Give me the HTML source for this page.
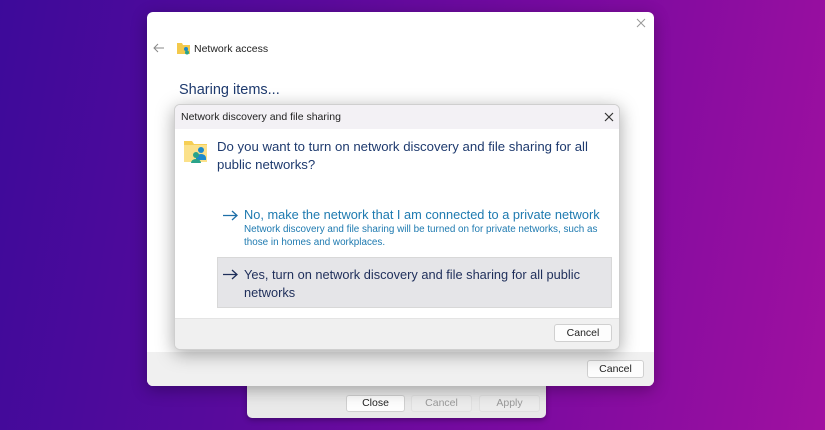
<!DOCTYPE html>
<html><head><meta charset="utf-8"><style>
*{margin:0;padding:0;box-sizing:border-box}
body{width:825px;height:430px;overflow:hidden;position:relative;font-family:"Liberation Sans",sans-serif;
background:linear-gradient(100deg,#3d0a9a 0%,#5a0a9c 35%,#7a0aa0 65%,#a010a0 100%);}
.abs{position:absolute}
.btn{position:absolute;background:#fdfdfd;border:1px solid #d0d0d0;border-radius:3px;font-size:10.5px;color:#222;text-align:center}
</style></head><body>
<div class="abs" style="left:247px;top:380px;width:299px;height:38px;background:#e9e9e9;border-radius:0 0 5px 5px;box-shadow:0 2px 6px rgba(0,0,0,.3)">
 <div class="btn" style="left:99px;top:15px;width:59px;height:17px;line-height:15px">Close</div>
 <div class="btn" style="left:164px;top:15px;width:61px;height:17px;line-height:15px;color:#999;background:#ececec;border-color:#e0e0e0">Cancel</div>
 <div class="btn" style="left:232px;top:15px;width:61px;height:17px;line-height:15px;color:#999;background:#ececec;border-color:#e0e0e0">Apply</div>
</div>
<div class="abs" style="left:147px;top:12px;width:507px;height:374px;background:#fff;border-radius:6px;overflow:hidden;box-shadow:0 4px 16px rgba(0,0,0,.3)">
 <svg class="abs" style="left:489px;top:6px" width="10" height="10" viewBox="0 0 10 10"><path d="M1 1L9 9M9 1L1 9" stroke="#999" stroke-width="1"/></svg>
 <svg class="abs" style="left:6px;top:31px" width="12" height="10" viewBox="0 0 12 10"><path d="M11 5H1M5 1L1 5l4 4" stroke="#888" stroke-width="1" fill="none"/></svg>
 <svg class="abs" style="left:30px;top:30px" width="14" height="13" viewBox="0 0 14 13"><path d="M0 1h5l1 2h7v9H0z" fill="#f3c94c"/><circle cx="9" cy="7" r="2" fill="#1d8acb"/><circle cx="10" cy="10.5" r="2" fill="#2aa38a"/></svg>
 <div class="abs" style="left:47px;top:31px;font-size:10.5px;color:#222">Network access</div>
 <div class="abs" style="left:32px;top:70px;font-size:14.5px;color:#1e3a6e">Sharing items...</div>
 <div class="abs" style="left:0;top:340px;width:507px;height:34px;background:#f0f0f0"></div>
 <div class="btn" style="left:440px;top:348px;width:57px;height:18px;line-height:16px">Cancel</div>
</div>
<div class="abs" style="left:174px;top:104px;width:446px;height:246px;background:#fff;border:1px solid #cfcfcf;border-radius:6px;overflow:hidden;box-shadow:0 4px 18px rgba(0,0,0,.35)">
 <div class="abs" style="left:0;top:0;width:446px;height:24px;background:#f3f1f5"></div>
 <div class="abs" style="left:6px;top:6px;font-size:10.5px;color:#222">Network discovery and file sharing</div>
 <svg class="abs" style="left:429px;top:7px" width="10" height="10" viewBox="0 0 10 10"><path d="M1 1L9 9M9 1L1 9" stroke="#333" stroke-width="1.2"/></svg>
 <svg class="abs" style="left:9px;top:35px" width="25" height="24" viewBox="0 0 25 24"><path d="M0 1h8l2 3h13v18H0z" fill="#f6cf55"/><path d="M0 5h23v17H0z" fill="#fbe18a"/><circle cx="17" cy="10" r="3" fill="#1d8acb"/><path d="M12 18a5 4 0 0 1 10 0v2H12z" fill="#1d8acb"/><circle cx="12" cy="15" r="3" fill="#2aa38a"/><path d="M7 23a5 4 0 0 1 10 0z" fill="#2aa38a"/></svg>
 <div class="abs" style="left:42px;top:33px;width:380px;font-size:13.2px;line-height:18px;color:#1e3a6e">Do you want to turn on network discovery and file sharing for all public networks?</div>
 <svg class="abs" style="left:47px;top:105px" width="16" height="11" viewBox="0 0 16 11"><path d="M1 5.5H15M10 1l5 4.5-5 4.5" stroke="#1e6fa8" stroke-width="1.3" fill="none"/></svg>
 <div class="abs" style="left:69px;top:102px;font-size:12.8px;color:#1e7ab0;white-space:nowrap">No, make the network that I am connected to a private network</div>
 <div class="abs" style="left:69px;top:119px;width:370px;font-size:9.9px;line-height:12.5px;color:#1e7ab0">Network discovery and file sharing will be turned on for private networks, such as those in homes and workplaces.</div>
 <div class="abs" style="left:42px;top:152px;width:395px;height:51px;background:#e5e5e8;border:1px solid #d8d8d8"></div>
 <svg class="abs" style="left:47px;top:164px" width="16" height="11" viewBox="0 0 16 11"><path d="M1 5.5H15M10 1l5 4.5-5 4.5" stroke="#1e2e5a" stroke-width="1.3" fill="none"/></svg>
 <div class="abs" style="left:69px;top:161px;width:360px;font-size:12.8px;line-height:18px;color:#1e2e5a">Yes, turn on network discovery and file sharing for all public networks</div>
 <div class="abs" style="left:0;top:213px;width:446px;height:33px;background:#f0f0f0;border-top:1px solid #e4e4e4"></div>
 <div class="btn" style="left:379px;top:219px;width:58px;height:18px;line-height:16px">Cancel</div>
</div>
</body></html>
